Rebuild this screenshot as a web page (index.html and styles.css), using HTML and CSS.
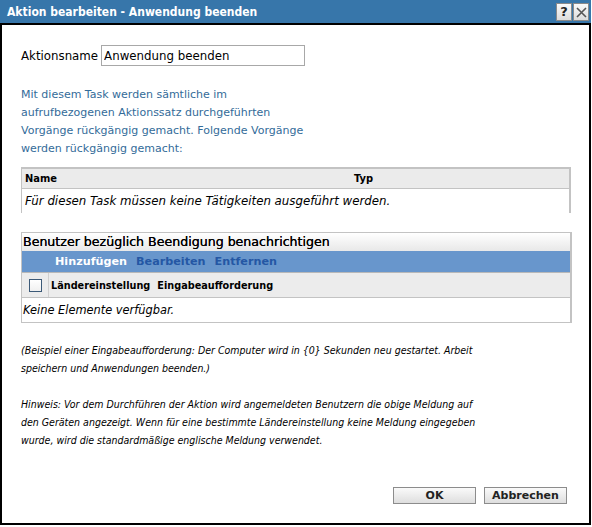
FILE: index.html
```html
<!DOCTYPE html>
<html lang="de">
<head>
    <meta charset="UTF-8">
    <title>Aktion bearbeiten - Anwendung beenden</title>
    <link rel="stylesheet" href="styles.css">
</head>
<body>

    <div class="dialog">
        <header class="titlebar">
            <h1>Aktion bearbeiten - Anwendung beenden</h1>
            <div class="title-buttons">
                <span class="tbtn">?</span>
                <span class="tbtn close">
                    <svg width="11" height="11" viewBox="0 0 11 11"><path d="M1 1 L10 10 M10 1 L1 10" stroke="#555" stroke-width="1.6"/></svg>
                </span>
            </div>
        </header>

        <main class="content">
            <div class="name-row">
                <label for="actionName">Aktionsname</label>
                <input type="text" id="actionName" value="Anwendung beenden">
            </div>

            <p class="info">Mit diesem Task werden sämtliche im aufrufbezogenen Aktionssatz durchgeführten Vorgänge rückgängig gemacht. Folgende Vorgänge werden rückgängig gemacht:</p>

            <table class="task-table">
                <thead>
                    <tr>
                        <th class="col-name">Name</th>
                        <th class="col-type">Typ</th>
                    </tr>
                </thead>
                <tbody>
                    <tr>
                        <td colspan="2">Für diesen Task müssen keine Tätigkeiten ausgeführt werden.</td>
                    </tr>
                </tbody>
            </table>

            <section class="notify">
                <h2>Benutzer bezüglich Beendigung benachrichtigen</h2>
                <div class="toolbar">
                    <a href="#" class="active">Hinzufügen</a>
                    <a href="#">Bearbeiten</a>
                    <a href="#">Entfernen</a>
                </div>
                <div class="list-head">
                    <span class="check-cell"><span class="checkbox"></span></span>
                    <span class="head-locale">Ländereinstellung</span>
                    <span>Eingabeaufforderung</span>
                </div>
                <div class="list-empty">Keine Elemente verfügbar.</div>
            </section>

            <p class="note">(Beispiel einer Eingabeaufforderung: Der Computer wird in {0} Sekunden neu gestartet. Arbeit speichern und Anwendungen beenden.)</p>

            <p class="note">Hinweis: Vor dem Durchführen der Aktion wird angemeldeten Benutzern die obige Meldung auf den Geräten angezeigt. Wenn für eine bestimmte Ländereinstellung keine Meldung eingegeben wurde, wird die standardmäßige englische Meldung verwendet.</p>
        </main>

        <footer class="buttons">
            <button type="button">OK</button>
            <button type="button">Abbrechen</button>
        </footer>
    </div>

</body>
</html>
```

FILE: styles.css
```css
/* Global */
body {
    margin: 0;
    padding: 0;
    background: #fff;
    font-family: 'DejaVu Sans', sans-serif;
    color: #000;
}

.dialog {
    width: 587px;
    height: 523px;
    border: 2px solid #000;
    border-top: none;
    display: flex;
    flex-direction: column;
}

/* Title bar */
.titlebar {
    height: 23px;
    background-color: #3776aa;
    border-bottom: 2px solid #000;
    display: flex;
    align-items: center;
    justify-content: space-between;
    margin: 0 -2px 0 -2px;
}

.titlebar h1 {
    margin: 0 0 0 7px;
    font-family: 'DejaVu Sans Condensed', 'DejaVu Sans', sans-serif;
    font-size: 12px;
    font-weight: bold;
    color: #fff;
}

.title-buttons {
    display: flex;
    gap: 1px;
    margin-right: 2px;
    align-self: flex-start;
    margin-top: 3px;
}

.tbtn {
    width: 14px;
    height: 16px;
    background: linear-gradient(#fafafa, #dcdcdc);
    border: 1px solid #8a8a8a;
    font-weight: bold;
    font-size: 13px;
    line-height: 16px;
    text-align: center;
    color: #222;
    display: flex;
    align-items: center;
    justify-content: center;
}

/* Content */
.content {
    flex: 1;
    padding: 20px 19px 0 19px;
}

.name-row {
    display: flex;
    align-items: center;
    gap: 3px;
    font-size: 11.8px;
}

.name-row input {
    width: 198px;
    height: 17px;
    padding: 1px 2px;
    border: 1px solid #a8a8a8;
    font-family: 'DejaVu Sans', sans-serif;
    font-size: 11.8px;
    color: #000;
}

.info {
    width: 292px;
    margin: 20px 0 0;
    font-size: 11px;
    line-height: 18px;
    color: #336b99;
}

/* Task table */
.task-table {
    width: 550px;
    margin-top: 9px;
    border-collapse: collapse;
}

.task-table th {
    background: #ebebeb;
    height: 19px;
    padding: 0 3px;
    border-top: 2px solid #c3c3c3;
    border-bottom: 1px solid #c3c3c3;
    font-family: 'DejaVu Sans Condensed', 'DejaVu Sans', sans-serif;
    font-size: 11px;
    font-weight: bold;
    text-align: left;
}

.task-table th.col-type {
    width: 212px;
}

.task-table td {
    height: 24px;
    padding: 0 3px;
    border-left: 1px solid #c3c3c3;
    border-right: 2px solid #c3c3c3;
    font-style: italic;
    font-size: 11.8px;
}

.task-table thead tr {
    border-left: 1px solid #c3c3c3;
    border-right: 2px solid #c3c3c3;
}

/* Notify section */
.notify {
    width: 548px;
    margin-top: 19px;
    border: 1px solid #c3c3c3;
    border-right-width: 2px;
}

.notify h2 {
    margin: 0;
    height: 18px;
    padding-left: 1px;
    background: linear-gradient(#fff, #e8e8e8);
    font-size: 12.6px;
    font-weight: normal;
    line-height: 18px;
    text-shadow: 0 0 0.4px #000;
}

.toolbar {
    height: 21px;
    background: #6896cc;
    border-bottom: 1px solid #b8b8b8;
    display: flex;
    align-items: center;
    gap: 9px;
    padding-left: 33px;
}

.toolbar a {
    font-size: 11.2px;
    font-weight: bold;
    color: #2457a4;
    text-decoration: none;
}

.toolbar a.active {
    color: #fff;
}

.list-head {
    height: 24px;
    background: #ececec;
    border-bottom: 1px solid #c3c3c3;
    display: flex;
    align-items: center;
    font-family: 'DejaVu Sans Condensed', 'DejaVu Sans', sans-serif;
    font-size: 10.8px;
    font-weight: bold;
}

.check-cell {
    width: 26px;
    height: 100%;
    border-right: 1px solid #d0d0d0;
    display: flex;
    align-items: center;
    justify-content: center;
}

.checkbox {
    width: 11px;
    height: 11px;
    border: 1px solid #3c5a78;
    background: linear-gradient(#fff, #f0f0f0);
}

.head-locale {
    margin-left: 2px;
    margin-right: 7px;
}

.list-empty {
    height: 24px;
    line-height: 24px;
    padding-left: 1px;
    font-style: italic;
    font-size: 11.4px;
}

.note {
    width: 462px;
    margin: 18px 0 0;
    font-family: 'DejaVu Sans Condensed', 'DejaVu Sans', sans-serif;
    font-style: italic;
    font-size: 10.5px;
    line-height: 18px;
}

/* Buttons */
.buttons {
    display: flex;
    justify-content: flex-end;
    gap: 8px;
    padding: 0 22px 19px 0;
}

.buttons button {
    width: 83px;
    height: 17px;
    padding: 0;
    background: linear-gradient(#fafafa, #dedede);
    border: 1px solid #8c8c8c;
    font-family: 'DejaVu Sans', sans-serif;
    font-size: 11px;
    font-weight: bold;
    color: #222;
}
```
